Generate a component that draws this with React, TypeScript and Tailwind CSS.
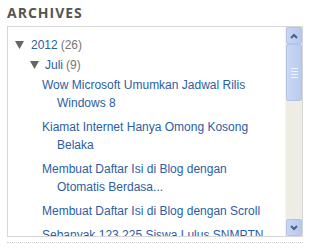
const posts = [
  "Wow Microsoft Umumkan Jadwal Rilis Windows 8",
  "Kiamat Internet Hanya Omong Kosong Belaka",
  "Membuat Daftar Isi di Blog dengan Otomatis Berdasa...",
  "Membuat Daftar Isi di Blog dengan Scroll",
  "Sebanyak 123.225 Siswa Lulus SNMPTN Jalur Undangan",
];

function Arrow({ up }: { up?: boolean }) {
  return (
    <div className="h-[17px] w-[16px] shrink-0 rounded-[2px] border border-[#b4c4e8] bg-[linear-gradient(90deg,#c8d6f4,#b7c9ef)] flex items-center justify-center">
      <svg width="8" height="6" viewBox="0 0 8 6">
        <path d={up ? "M1 5 L4 2 L7 5" : "M1 1 L4 4 L7 1"} fill="none" stroke="#4d6185" strokeWidth="2" />
      </svg>
    </div>
  );
}

function Scrollbar() {
  return (
    <div className="w-[17px] shrink-0 flex flex-col bg-[#eeede5] border-l border-[#f3f3ee]">
      <Arrow up />
      <div className="h-[57px] shrink-0 rounded-[2px] border border-[#b4c4e8] bg-[linear-gradient(90deg,#cad8f5,#b9cbf0)] flex flex-col items-center justify-center gap-[2px]">
        <div className="h-px w-[7px] bg-[#eef3fd]" />
        <div className="h-px w-[7px] bg-[#eef3fd]" />
        <div className="h-px w-[7px] bg-[#eef3fd]" />
        <div className="h-px w-[7px] bg-[#eef3fd]" />
      </div>
      <div className="flex-1" />
      <Arrow />
    </div>
  );
}

function Caret() {
  return (
    <svg width="9" height="8" viewBox="0 0 9 8" className="shrink-0">
      <path d="M0 0 H9 L4.5 8 Z" fill="#666" />
    </svg>
  );
}

export default function App() {
  return (
    <div className="w-[310px] h-[249px] bg-white px-[7px] pt-[5px] font-['Liberation_Sans',Arial,sans-serif]">
      <h2 className="font-['Open_Sans',sans-serif] text-[14px] font-bold tracking-[1px] text-[#555] leading-[16px] h-[21px]">ARCHIVES</h2>
      <div className="h-[211px] border border-[#d6d6d6] flex">
        <div className="flex-1 overflow-hidden pl-[7px] pt-[8px] text-[12px]">
          <div className="flex items-center h-[20px]">
            <Caret />
            <a className="text-[#2b5ea3] ml-[7px]">2012</a>
            <span className="text-[#777] ml-[3px]">(26)</span>
          </div>
          <div className="flex items-center h-[20px] pl-[15px]">
            <Caret />
            <a className="text-[#2b5ea3] ml-[6px]">Juli</a>
            <span className="text-[#777] ml-[3px]">(9)</span>
          </div>
          <ul className="pl-[27px] pr-[10px] mt-[1px] flex flex-col gap-[6px]">
            {posts.map((p) => (
              <li key={p} className="pl-[15px] -indent-[15px] leading-[18px] text-[#2b5ea3]">
                {p}
              </li>
            ))}
          </ul>
        </div>
        <Scrollbar />
      </div>
      <div className="mt-[5px] border-t border-dotted border-[#ccc]" />
    </div>
  );
}
